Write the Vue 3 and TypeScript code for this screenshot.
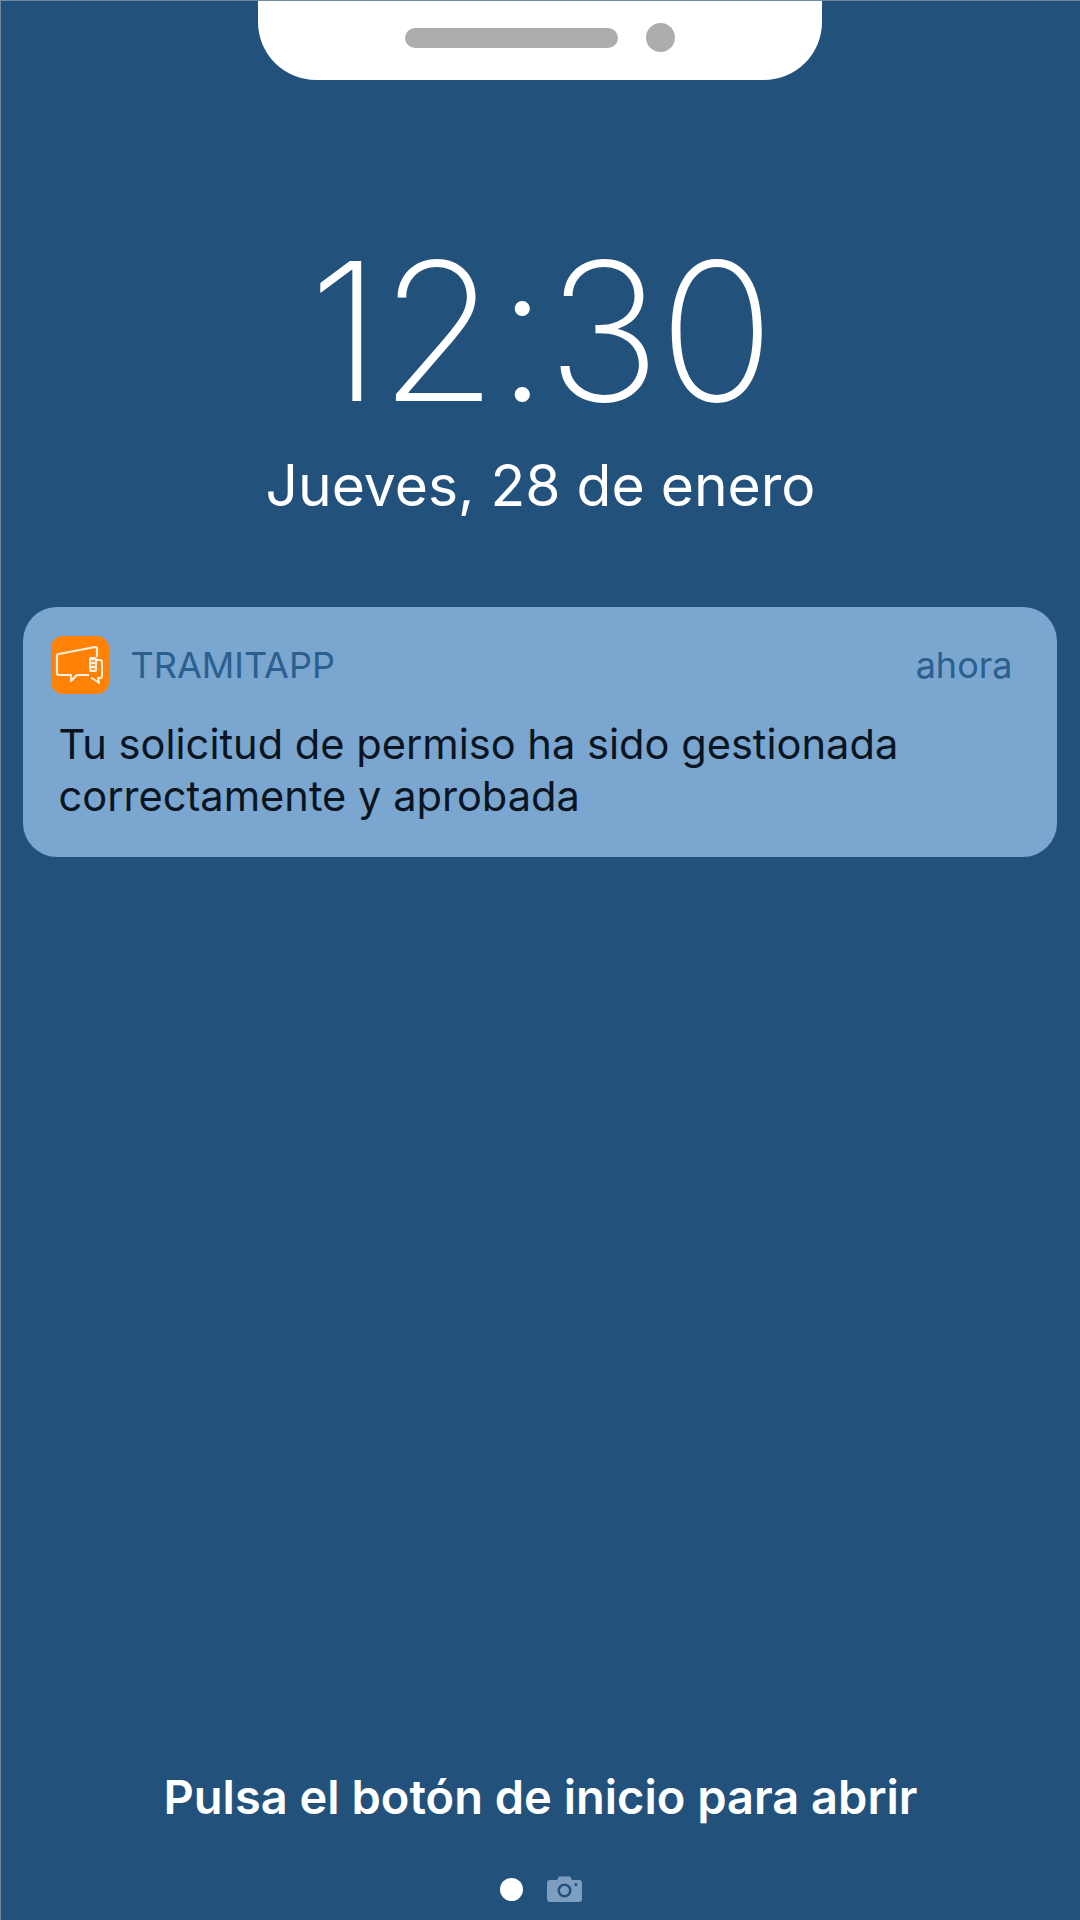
<script setup lang="ts">
const title = 'TRAMITAPP'
const message = 'Tu solicitud de permiso ha sido gestionada correctamente y aprobada'
</script>

<template>
  <div class="screen">
    <div class="notch">
      <span class="speaker"></span>
      <span class="lens"></span>
    </div>

    <div class="time">12:30</div>
    <div class="date">Jueves, 28 de enero</div>

    <div class="card">
      <div class="card-head">
        <svg class="app-icon" viewBox="0 0 58 58">
          <rect width="58" height="58" rx="12" fill="#ff8205" />
          <path d="M38 39 H26 L20 45 V39 H8 Q6 39 6 37 V20 Q6 18 8 18 L44 11 Q46 11 46 13 V21" fill="none" stroke="#fdeedd" stroke-width="2.2" stroke-linejoin="round" />
          <path d="M46 24 H49 Q51 24 51 26 V40 Q51 42 49 42 H47 L48 47 L41 42 H40" fill="none" stroke="#fdeedd" stroke-width="2" stroke-linejoin="round" />
          <rect x="38" y="21" width="8" height="15" rx="2" fill="#fdeedd" />
          <path d="M40 25 H44 M40 29 H44 M40 33 H44" stroke="#ff8205" stroke-width="1.3" />
        </svg>
        <span class="app-name">{{ title }}</span>
        <span class="when">ahora</span>
      </div>
      <p class="message">{{ message }}</p>
    </div>

    <div class="hint">Pulsa el botón de inicio para abrir</div>
    <div class="pager">
      <span class="dot"></span>
      <svg class="camera" viewBox="0 0 35 26">
        <path fill-rule="evenodd" fill="#7d9ebf" d="M3 4 H10 L12 0.5 H23 L25 4 H32 Q35 4 35 7 V23 Q35 26 32 26 H3 Q0 26 0 23 V7 Q0 4 3 4 Z M17.5 7.5 A7 7 0 1 0 17.5 21.5 A7 7 0 1 0 17.5 7.5 Z M17.5 10 A4.5 4.5 0 1 1 17.5 19 A4.5 4.5 0 1 1 17.5 10 Z M29 7 A1.6 1.6 0 1 0 29 10.2 A1.6 1.6 0 1 0 29 7 Z" />
      </svg>
    </div>
  </div>
</template>

<style scoped>
* {
  box-sizing: border-box;
}

.screen {
  width: 1080px;
  height: 1920px;
  background: #22527c;
  border-top: 1px solid #7089a3;
  border-left: 1px solid #7089a3;
  font-family: Inter, "Noto Sans", sans-serif;
  display: flex;
  flex-direction: column;
  align-items: center;
  overflow: hidden;
}

.notch {
  width: 564px;
  height: 79px;
  flex: none;
  margin-left: -2px;
  background: #fff;
  border-radius: 0 0 58px 58px;
  display: flex;
  align-items: center;
  padding-left: 147px;
  padding-bottom: 6px;
}

.speaker {
  width: 213px;
  height: 20px;
  background: #adadad;
  border-radius: 10px;
}

.lens {
  width: 29px;
  height: 29px;
  margin-left: 28px;
  background: #adadad;
  border-radius: 50%;
}

.time {
  margin-top: 151px;
  font-size: 192px;
  line-height: 200px;
  font-weight: 250;
  letter-spacing: -2px;
  color: #fff;
}

.date {
  margin-top: 23px;
  font-size: 57px;
  line-height: 64px;
  color: #fff;
}

.card {
  width: 1034px;
  height: 250px;
  flex: none;
  margin-top: 89px;
  margin-left: -2px;
  padding: 29px 44px 0 28px;
  background: #7aa6cf;
  border-radius: 34px;
}

.card-head {
  display: flex;
  align-items: center;
}

.app-icon {
  width: 58px;
  height: 58px;
  flex: none;
}

.app-name {
  margin-left: 22px;
  font-size: 36px;
  color: #2b5f90;
}

.when {
  margin-left: auto;
  font-size: 36px;
  color: #2b5f90;
}

.message {
  margin: 24px 0 0 8px;
  font-size: 41.6px;
  line-height: 52px;
  color: #0a1521;
}

.hint {
  margin-top: auto;
  font-size: 47px;
  line-height: 54px;
  font-weight: 600;
  color: #fff;
}

.pager {
  display: flex;
  align-items: center;
  gap: 24px;
  margin-top: 52px;
  margin-bottom: 18px;
  margin-left: 0;
}

.dot {
  width: 23px;
  height: 23px;
  background: #fff;
  border-radius: 50%;
}

.camera {
  width: 35px;
  height: 26px;
}
</style>
